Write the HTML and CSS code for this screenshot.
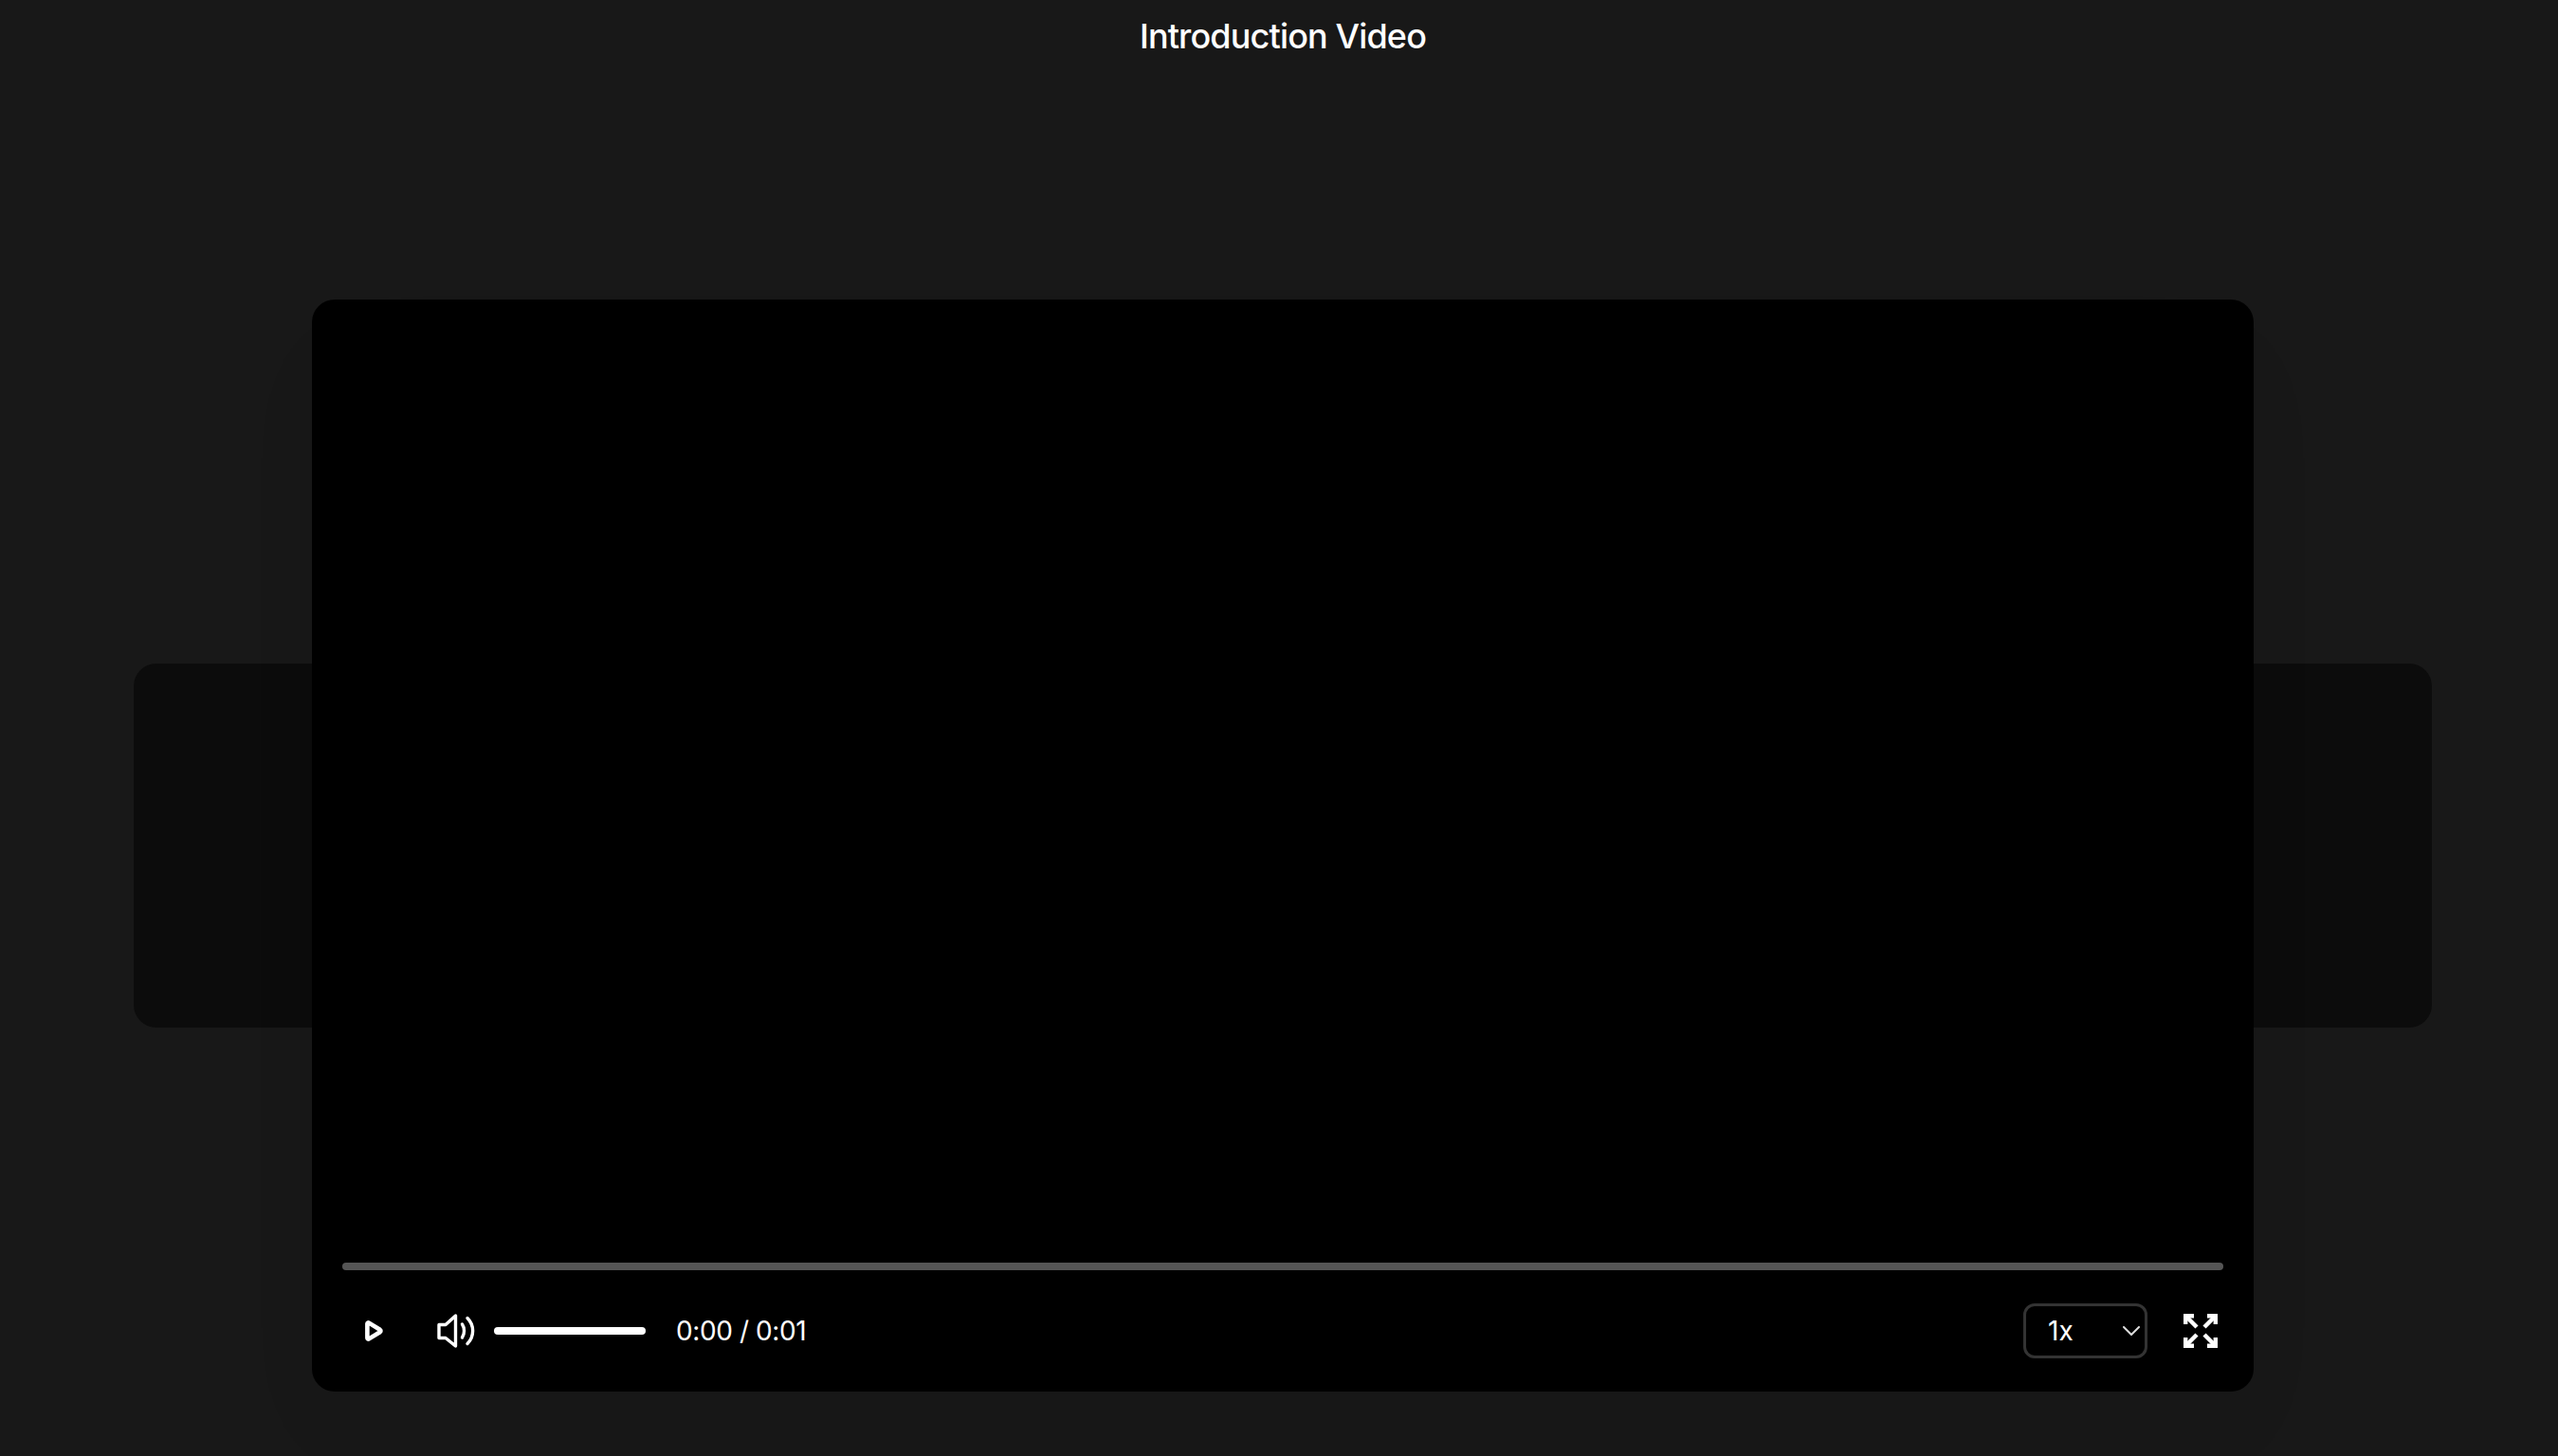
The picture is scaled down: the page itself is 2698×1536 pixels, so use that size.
FILE: index.html
```html
<!DOCTYPE html>
<html lang="en">
<head>
<meta charset="utf-8">
<title>Introduction Video</title>
<link rel="stylesheet" href="styles.css">
</head>
<body>
<main class="page">
  <h1 class="title">Introduction Video</h1>
  <section class="stage">
    <div class="backdrop"></div>
    <div class="player">
      <div class="screen"></div>
      <div class="progress"></div>
      <div class="controls">
        <button class="icon-btn play" aria-label="Play">
          <svg width="19" height="22" viewBox="0 0 19 22" fill="none" stroke="#fff" stroke-width="4.6" stroke-linejoin="round" stroke-linecap="round"><path d="M2.4 3.6C2.4 2.6 3.4 2.1 4.2 2.6L15.8 9.8C16.7 10.4 16.7 11.6 15.8 12.2L4.2 19.4C3.4 19.9 2.4 19.4 2.4 18.4Z"/></svg>
        </button>
        <button class="icon-btn volume" aria-label="Volume">
          <svg width="40" height="36" viewBox="0 0 40 36" fill="none" stroke="#fff" stroke-width="3.4" stroke-linejoin="round" stroke-linecap="round"><path d="M19.5 2V34L9 25.5H2V11.5H9Z"/><path d="M26.5 11C29.2 15 29.2 21 26.5 25"/><path d="M32 4.5C39.5 12 39.5 24 32 31.5"/></svg>
        </button>
        <div class="volume-bar"></div>
        <span class="time">0:00 / 0:01</span>
        <div class="speed">
          <span class="speed-value">1x</span>
          <svg class="chevron" width="18" height="10" viewBox="0 0 18 10" fill="none" stroke="#ddd" stroke-width="2" stroke-linecap="round" stroke-linejoin="round"><path d="M1 1 9 9 17 1"/></svg>
        </div>
        <button class="icon-btn fullscreen" aria-label="Fullscreen">
          <svg width="36" height="36" viewBox="0 0 36 36" fill="none" stroke="#fff" stroke-width="4.4"><path d="M2.2 11V2.2H11"/><path d="M3.5 3.5 14 14"/><path d="M25 2.2H33.8V11"/><path d="M32.5 3.5 22 14"/><path d="M2.2 25V33.8H11"/><path d="M3.5 32.5 14 22"/><path d="M25 33.8H33.8V25"/><path d="M32.5 32.5 22 22"/></svg>
        </button>
      </div>
    </div>
  </section>
</main>
</body>
</html>
```
FILE: styles.css
```css
* { box-sizing: border-box; }
html, body { margin: 0; height: 100%; background: #181818; overflow: hidden; }
body { font-family: Inter, "Liberation Sans", sans-serif; color: #fff; }
.page { width: 2706px; height: 1536px; display: flex; flex-direction: column; align-items: center; }
.title { margin: 0; padding-top: 18px; font-size: 36px; line-height: 40px; font-weight: 500; letter-spacing: -0.85px; flex: none; }
.stage { position: relative; margin-top: 258px; width: 2048px; height: 1152px; flex: none; }
.backdrop { position: absolute; left: -188px; right: -188px; top: 384px; height: 384px; background: #0c0c0c; border-radius: 24px; }
.player { position: relative; width: 100%; height: 100%; background: #000; border-radius: 24px; display: flex; flex-direction: column; padding: 0 32px; box-shadow: 0 50px 100px -24px rgba(0,0,0,.06); }
.screen { flex: 1; }
.progress { height: 8px; border-radius: 4px; background: #555; flex: none; }
.controls { height: 128px; flex: none; display: flex; align-items: center; }
.icon-btn { padding: 0; border: 0; background: none; display: flex; flex: none; }
.play { margin-left: 24px; }
.volume { margin-left: 57px; }
.volume-bar { width: 160px; height: 8px; margin-left: 20px; border-radius: 4px; background: #fff; flex: none; }
.time { margin-left: 32px; font-size: 28px; line-height: 34px; letter-spacing: -0.4px; }
.speed { margin-left: auto; width: 131px; height: 58px; display: flex; align-items: center; justify-content: space-between; padding: 0 5px 0 23px; border: 3px solid #333; border-radius: 12px; font-size: 28px; }
.fullscreen { margin-left: 38px; margin-right: 6px; }
```
